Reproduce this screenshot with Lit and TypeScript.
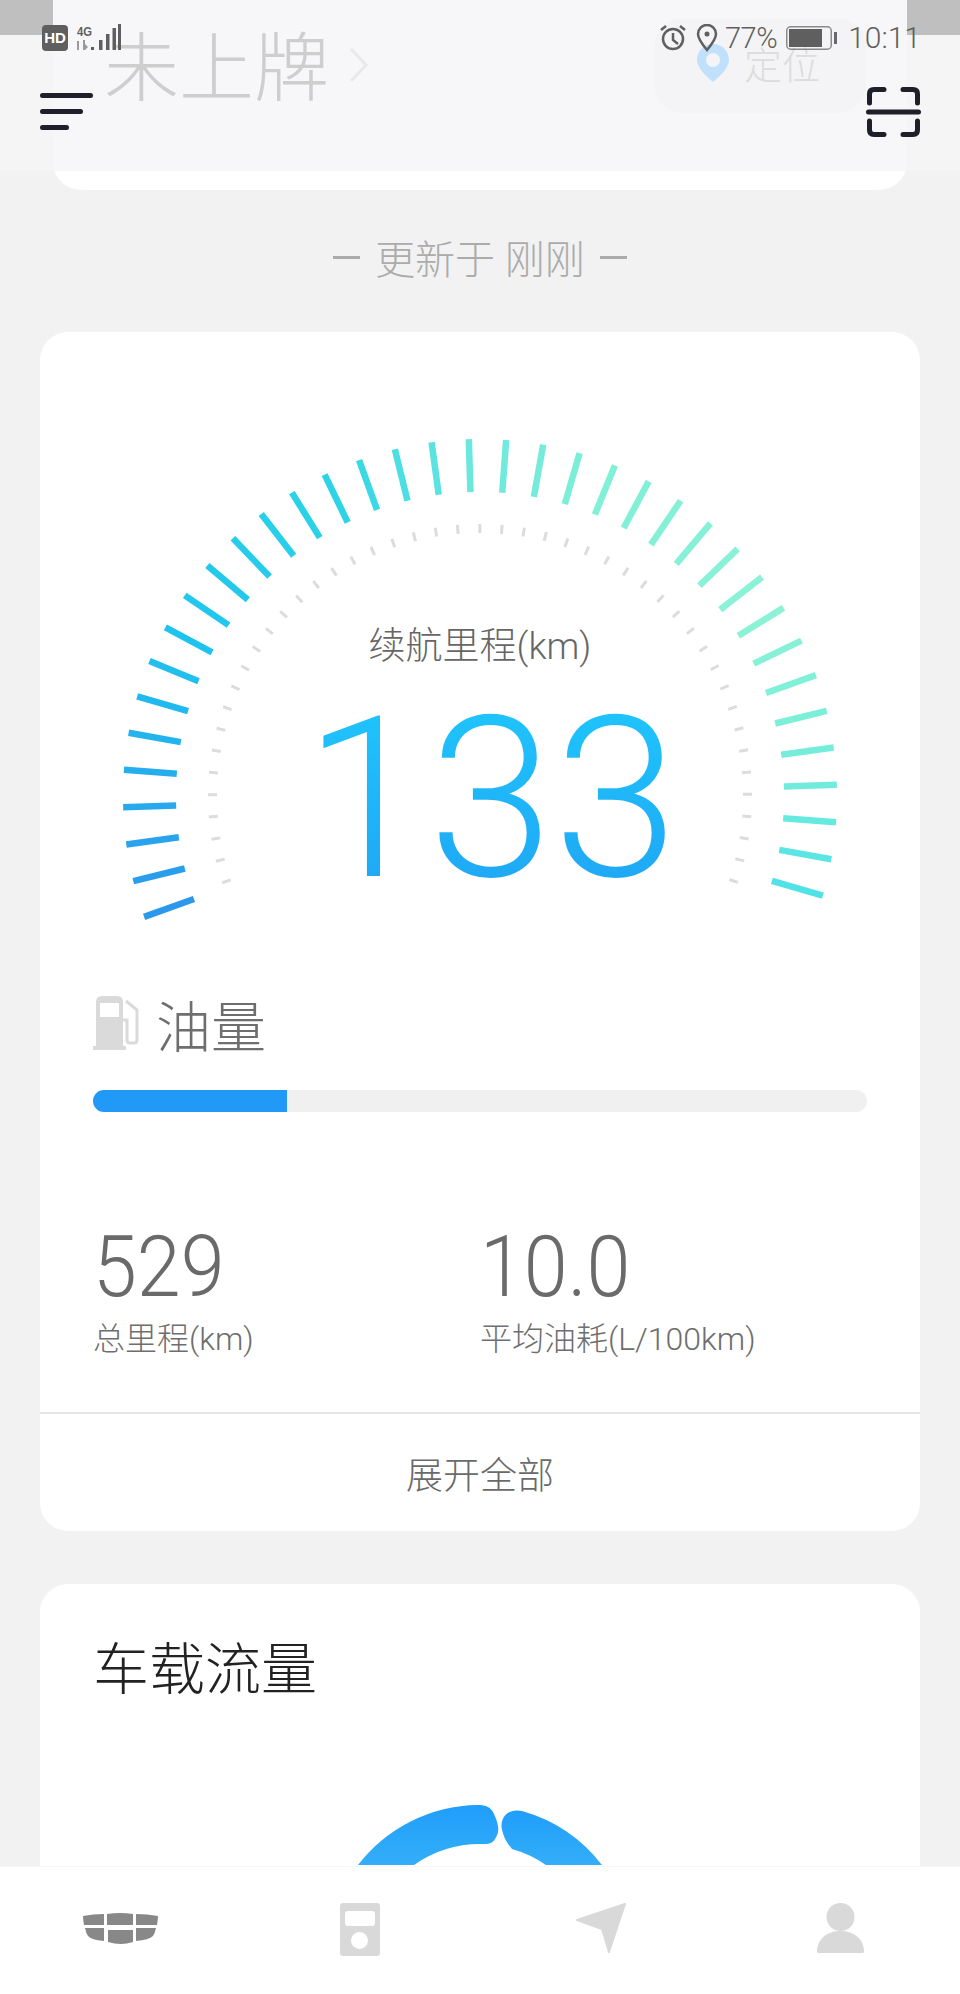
import { LitElement, html, css, svg } from "lit";
import { customElement } from "lit/decorators.js";

// gauge geometry, in the coordinates of the gauge box
const CX = 440;
const CY = 464;

const TICK_COLORS: [number, number[]][] = [
  [0, [43, 152, 236]],
  [0.22, [31, 196, 238]],
  [0.39, [44, 212, 230]],
  [0.5, [106, 232, 222]],
  [0.61, [128, 240, 214]],
  [0.78, [140, 242, 214]],
  [0.92, [112, 236, 220]],
  [1, [80, 226, 230]],
];

function tickColor(t: number) {
  for (let i = 1; i < TICK_COLORS.length; i++) {
    const [t1, c1] = TICK_COLORS[i];
    const [t0, c0] = TICK_COLORS[i - 1];
    if (t <= t1) {
      const k = (t - t0) / (t1 - t0);
      const c = c0.map((v, n) => Math.round(v + (c1[n] - v) * k));
      return `rgb(${c.join(",")})`;
    }
  }
  return "#50e2e6";
}

function radial(deg: number, r0: number, r1: number) {
  const a = (deg * Math.PI) / 180;
  return {
    x1: CX - Math.cos(a) * r0,
    y1: CY - Math.sin(a) * r0,
    x2: CX - Math.cos(a) * r1,
    y2: CY - Math.sin(a) * r1,
  };
}

@customElement("app-root")
export class AppRoot extends LitElement {
  static styles = css`
    :host {
      display: block;
      position: relative;
      width: 960px;
      height: 1994px;
      overflow: hidden;
      background: #f2f2f2;
      font-family: Roboto, "Noto Sans CJK SC", sans-serif;
      font-weight: 300;
    }

    .top {
      height: 190px;
      padding: 0 53px;
      box-sizing: border-box;
      background: linear-gradient(#f5f5f6 171px, transparent 171px);
    }
    .top-card {
      height: 190px;
      box-sizing: border-box;
      padding: 18px 41px 0 51px;
      display: flex;
      align-items: flex-start;
      border-radius: 0 0 28px 28px;
      background: linear-gradient(#f7f7f9 171px, #fff 171px);
    }
    .plate {
      font-size: 75px;
      line-height: 103px;
      color: #cecece;
    }
    .chevron {
      margin: 30px 0 0 21px;
    }
    .locate {
      margin-left: auto;
      width: 212px;
      height: 95px;
      box-sizing: border-box;
      padding: 0 0 6px 43px;
      display: flex;
      align-items: center;
      gap: 15px;
      border-radius: 28px;
      background: #f4f4f6;
      font-size: 38px;
      color: #dcdcdc;
    }

    .corner {
      position: absolute;
      top: 0;
      width: 53px;
      height: 35px;
      background: #bfbfbf;
    }
    .corner.left {
      left: 0;
    }
    .corner.right {
      right: 0;
    }

    .status {
      position: absolute;
      top: 24px;
      left: 42px;
      right: 39px;
      height: 28px;
      display: flex;
      align-items: center;
      color: #5f5f5f;
    }
    .hd {
      width: 26px;
      height: 26px;
      border-radius: 4px;
      background: #5f5f5f;
      color: #fff;
      font: 700 15px/26px "Liberation Sans", sans-serif;
      text-align: center;
    }
    .signal {
      margin-left: 9px;
    }
    .status-right {
      margin-left: auto;
      display: flex;
      align-items: center;
    }
    .pct {
      font-size: 29px;
      line-height: 28px;
      margin-left: 7px;
      letter-spacing: -0.5px;
    }
    .battery {
      margin-left: 9px;
    }
    .clock {
      font-size: 30px;
      line-height: 28px;
      margin-left: 10px;
    }

    .nav {
      position: absolute;
      top: 87px;
      left: 40px;
      right: 39px;
      display: flex;
      justify-content: space-between;
      align-items: flex-start;
    }
    .menu {
      display: flex;
      flex-direction: column;
      gap: 11px;
      padding-top: 6px;
    }
    .menu span {
      height: 5px;
      border-radius: 3px;
      background: #1f1f2b;
    }

    .updated {
      height: 142px;
      box-sizing: border-box;
      padding-bottom: 8px;
      display: flex;
      align-items: center;
      justify-content: center;
      gap: 15px;
      font-size: 40px;
      color: #ababab;
    }
    .dash {
      width: 27px;
      height: 3px;
      background: #ababab;
    }

    .card {
      margin: 0 40px;
      border-radius: 28px;
      background: #fff;
    }
    .gauge {
      display: grid;
      height: 658px;
    }
    .gauge > * {
      grid-area: 1 / 1;
    }
    .readout {
      display: flex;
      flex-direction: column;
      align-items: center;
      padding-top: 290px;
    }
    .readout-label {
      font-size: 37px;
      line-height: 50px;
      color: #666;
    }
    .readout-value {
      margin-top: 27px;
      padding-left: 22px;
      font-size: 225px;
      line-height: 200px;
      background: linear-gradient(#1fc2fb 10%, #1fa9f5 90%);
      -webkit-background-clip: text;
      background-clip: text;
      color: transparent;
    }

    .fuel {
      margin: 0 53px;
    }
    .fuel-head {
      display: flex;
      align-items: center;
      gap: 15px;
      height: 66px;
      font-size: 55px;
      color: #6e6e6e;
    }
    .track {
      margin-top: 34px;
      height: 22px;
      border-radius: 11px;
      background: #f0f0f0;
    }
    .fill {
      height: 100%;
      border-radius: 11px 0 0 11px;
      background: #2199f7;
    }

    .stats {
      display: grid;
      grid-template-columns: 387px 1fr;
      margin: 105px 53px 0;
      color: #6a6a6a;
    }
    .stat-value {
      font-size: 85px;
      line-height: 100px;
      transform: scaleX(0.93);
      transform-origin: left;
    }
    .stat-label {
      font-size: 32px;
      line-height: 44px;
      color: #6e6e6e;
    }

    .expand {
      margin-top: 51px;
      height: 119px;
      border-top: 2px solid #e6e6e6;
      box-sizing: border-box;
      display: flex;
      align-items: center;
      justify-content: center;
      font-size: 37px;
      color: #6a6a6a;
    }

    .card.traffic {
      margin-top: 53px;
      height: 520px;
    }
    .traffic-title {
      padding: 50px 0 0 53px;
      font-size: 56px;
      line-height: 72px;
      color: #222;
    }
    .ring {
      display: block;
      margin: 93px auto 0;
    }

    .tabs {
      position: absolute;
      left: 0;
      right: 0;
      bottom: 0;
      height: 128px;
      box-sizing: border-box;
      border-top: 1px solid #f6f6f6;
      background: #fff;
      padding: 36px 0 0 83px;
      display: grid;
      grid-template-columns: 257px 236px 241px 1fr;
      align-items: start;
    }
    .tab-logo {
      margin-top: 10px;
    }
  `;

  renderMajorTicks() {
    return Array.from({ length: 37 }, (_, i) => {
      const p = radial(-19.8 + i * 6, 357, 304);
      return svg`<line x1=${p.x1} y1=${p.y1} x2=${p.x2} y2=${p.y2}
        stroke=${tickColor(i / 36)} stroke-width="6.5"></line>`;
    });
  }

  renderMinorTicks() {
    return Array.from({ length: 47 }, (_, i) => {
      const p = radial(-18.6 + i * 4.72, 272, 263);
      return svg`<line x1=${p.x1} y1=${p.y1} x2=${p.x2} y2=${p.y2}
        stroke="#dcdcdc" stroke-width="3"></line>`;
    });
  }

  render() {
    return html`
      <div class="top">
        <div class="top-card">
          <span class="plate">未上牌</span>
          <svg class="chevron" width="18" height="34" viewBox="0 0 18 34">
            <path d="M1 1l15 16L1 33" fill="none" stroke="#e9e9ea" stroke-width="3" />
          </svg>
          <div class="locate">
            <svg width="32" height="38" viewBox="0 0 32 38">
              <path
                fill-rule="evenodd"
                fill="#c0e0fb"
                d="M16 0C7 0 0 7 0 16c0 8 10 17 16 22 6-5 16-14 16-22C32 7 25 0 16 0zm0 9a7 7 0 110 14 7 7 0 010-14z"
              />
            </svg>
            <span>定位</span>
          </div>
        </div>
      </div>

      <div class="updated">
        <span class="dash"></span>
        <span>更新于 刚刚</span>
        <span class="dash"></span>
      </div>

      <div class="card">
        <div class="gauge">
          <svg width="880" height="658" viewBox="0 0 880 658">
            ${this.renderMajorTicks()} ${this.renderMinorTicks()}
          </svg>
          <div class="readout">
            <span class="readout-label">续航里程(km)</span>
            <span class="readout-value">133</span>
          </div>
        </div>

        <div class="fuel">
          <div class="fuel-head">
            <svg width="48" height="54" viewBox="0 0 48 54">
              <path
                fill="#dadada"
                fill-rule="evenodd"
                d="M3 6q0-6 6-6h15q6 0 6 6v44h3v4H0v-4h3zM7 7v14h19V7z"
              />
              <path
                fill="none"
                stroke="#dadada"
                stroke-width="3"
                d="M33 5l11 9v30q0 3-3 3h-4q-3 0-3-3V24h-4"
              />
            </svg>
            <span>油量</span>
          </div>
          <div class="track"><div class="fill" style="width: ${(194 / 773) * 100}%"></div></div>
        </div>

        <div class="stats">
          <div>
            <div class="stat-value">529</div>
            <div class="stat-label">总里程(km)</div>
          </div>
          <div>
            <div class="stat-value">10.0</div>
            <div class="stat-label">平均油耗(L/100km)</div>
          </div>
        </div>

        <div class="expand">展开全部</div>
      </div>

      <div class="card traffic">
        <div class="traffic-title">车载流量</div>
        <svg class="ring" width="360" height="70" viewBox="300 1800 360 70">
          <defs>
            <linearGradient id="ring" x1="0" y1="0" x2="0" y2="1">
              <stop offset="0" stop-color="#1f9efb" />
              <stop offset="1" stop-color="#34aef8" />
            </linearGradient>
          </defs>
          <path
            fill="url(#ring)"
            d="M358 1866A154 154 0 0 1 478 1806C486 1806 491 1808 494 1815C499 1826 500 1833 495 1840C492 1845 488 1845 482 1845A115 115 0 0 0 414 1866Z"
          />
          <path
            fill="url(#ring)"
            d="M522 1812A154 154 0 0 1 602 1866L546 1866A115 115 0 0 0 512 1850C506 1843 503 1837 501.5 1828C501 1818 508 1809 522 1812Z"
          />
        </svg>
      </div>

      <div class="corner left"></div>
      <div class="corner right"></div>

      <div class="status">
        <span class="hd">HD</span>
        <svg class="signal" width="44" height="28" viewBox="0 0 44 28">
          <text x="0" y="12" font-family="Liberation Sans" font-weight="700" font-size="13"
            textLength="15" lengthAdjust="spacingAndGlyphs" fill="#5f5f5f">4G</text>
          <path
            fill="#9a9a9a"
            d="M0 17h2v9H0zM6 16h2v10H6zM8 20l3 3-3 3z"
          />
          <path
            fill="#5f5f5f"
            d="M14 23h3v3h-3zM22 16h3.500v10H22zM29 10h3.500v16H29zM35.500 4H39v22h-3.500zM41 0h3v26h-3z"
          />
        </svg>
        <div class="status-right">
          <svg width="28" height="28" viewBox="0 0 28 28">
            <circle cx="14" cy="15" r="10" fill="none" stroke="#5f5f5f" stroke-width="2.500" />
            <path
              d="M14 9v7l5 4M2 6l5-4M26 6l-5-4"
              fill="none"
              stroke="#5f5f5f"
              stroke-width="2.500"
            />
          </svg>
          <svg style="margin-left: 9px" width="22" height="28" viewBox="0 0 22 28">
            <path
              fill="none"
              stroke="#5f5f5f"
              stroke-width="2.500"
              d="M11 26C6 20 2 15 2 10a9 9 0 0118 0c0 5-4 10-9 16z"
            />
            <circle cx="11" cy="10" r="2.500" fill="#5f5f5f" />
          </svg>
          <span class="pct">77%</span>
          <svg class="battery" width="52" height="24" viewBox="0 0 52 24">
            <rect x="0.750" y="0.750" width="44.500" height="22.500" rx="4" fill="none" stroke="#8a8a8a" stroke-width="1.500" />
            <rect x="3" y="3" width="33" height="18" fill="#5f5f5f" />
            <rect x="48" y="6" width="3" height="12" fill="#6a6a6a" />
          </svg>
          <span class="clock">10:11</span>
        </div>
      </div>

      <div class="nav">
        <div class="menu">
          <span style="width: 53px"></span>
          <span style="width: 43px"></span>
          <span style="width: 29px"></span>
        </div>
        <svg width="55" height="50" viewBox="0 0 55 50">
          <path
            fill="none"
            stroke="#1f1f2b"
            stroke-width="5"
            stroke-linecap="round"
            d="M18 2.500H8q-4.500 0-4.500 4.500v9M37 2.500h10q4.500 0 4.500 4.500v9M18 47.500H8q-4.500 0-4.500-4.500v-9M37 47.500h10q4.500 0 4.500-4.500v-9M2.500 25h50"
          />
        </svg>
      </div>

      <div class="tabs">
        <svg class="tab-logo" width="75" height="31" viewBox="0 0 75 31">
          <g fill="#888">
            <path d="M0 3q10-2 21-2v11H1q-1-5-1-9z" />
            <path d="M24 1q13-2 26 0v11H24z" />
            <path d="M53 1q11 0 22 2 0 4-1 9H53z" />
            <path d="M2 15h19v13Q8 27 5 23q-2-3-3-8z" />
            <path d="M25 17h25v12q-12 4-25 0z" />
            <path d="M53 15h20q-1 5-3 8-4 4-17 5z" />
          </g>
        </svg>
        <svg width="40" height="53" viewBox="0 0 40 53">
          <path
            fill="#d9d9d9"
            fill-rule="evenodd"
            d="M3 0h34q3 0 3 3v47q0 3-3 3H3q-3 0-3-3V3q0-3 3-3zM8 8q-3 0-3 3v9q0 3 3 3h24q3 0 3-3v-9q0-3-3-3zM19.500 29a8.500 8.500 0 100 17 8.500 8.500 0 000-17z"
          />
        </svg>
        <svg width="50" height="50" viewBox="0 0 50 50">
          <path fill="#d9d9d9" stroke="#d9d9d9" stroke-linejoin="round" stroke-width="2" d="M49 1L1 17l25 9 7 23z" />
        </svg>
        <svg width="47" height="51" viewBox="0 0 47 51">
          <circle cx="23.500" cy="14" r="14" fill="#d9d9d9" />
          <path fill="#d9d9d9" d="M0 49C0 36 10 28 23.500 28S47 36 47 49q0 1-2 1H2q-2 0-2-1z" />
        </svg>
      </div>
    `;
  }
}
